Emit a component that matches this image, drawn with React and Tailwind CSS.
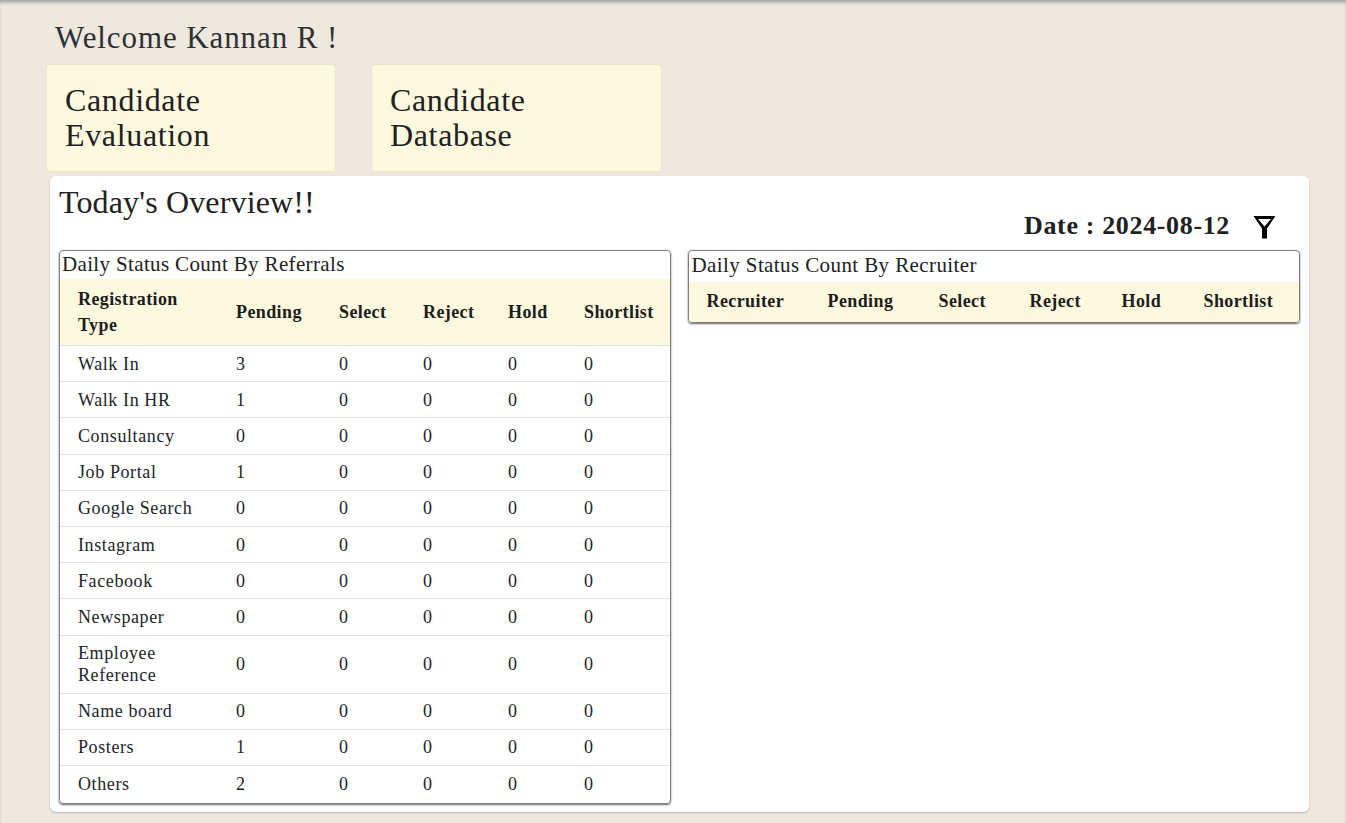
const serif = { fontFamily: '"Liberation Serif", serif' };

const referralRows = [
  ["Walk In", 3],
  ["Walk In HR", 1],
  ["Consultancy", 0],
  ["Job Portal", 1],
  ["Google Search", 0],
  ["Instagram", 0],
  ["Facebook", 0],
  ["Newspaper", 0],
  ["Employee Reference", 0],
  ["Name board", 0],
  ["Posters", 1],
  ["Others", 2],
];

const referralCols = [158, 103, 84, 85, 76, 104];
const recruiterCols = [121, 111, 91, 92, 82, 114];

const HeaderCell = ({ children, width }) => (
  <th
    style={{ width }}
    className="pl-[18px] pr-2 text-left align-middle text-[18px] leading-[26px] font-bold tracking-[0.4px] text-[#1d1d1d]"
  >
    {children}
  </th>
);

const QuickCard = ({ first, second, className }) => (
  <div className={`h-[108px] rounded border border-[#ebe5cf] bg-[#fdf9df] pt-[18px] pl-[18px] text-[32px] leading-[35px] tracking-[0.65px] text-[#212121] ${className}`}>
    {first}
    <br />
    {second}
  </div>
);

const App = () => {
  return (
    <div style={serif} className="h-[823px] w-full overflow-hidden bg-[#efe8df] shadow-[inset_0_4px_4px_-2px_#999]">
      {/* greeting */}
      <h1 className="pt-[20px] pl-[55px] text-[31px] leading-[36px] tracking-[0.9px] text-[#2d3136]">
        Welcome Kannan R !
      </h1>

      {/* quick links */}
      <div className="mt-[8px] ml-[46px] flex gap-[35px]">
        <QuickCard className="w-[290px]" first="Candidate" second="Evaluation" />
        <QuickCard className="w-[291px]" first="Candidate" second="Database" />
      </div>

      {/* overview */}
      <div className="mt-[4px] ml-[50px] h-[636px] w-[1259px] rounded-md bg-white px-[9px] shadow-[0_1px_2px_#b5b5b5]">
        <div className="flex h-[74px] items-start justify-between">
          <h2 className="pt-[8px] text-[32px] leading-[36px] tracking-[0.15px] text-[#212121]">
            Today's Overview!!
          </h2>
          <div className="flex items-center pt-[33px] pr-[24px]">
            <span className="text-[26px] leading-[34px] font-bold tracking-[0.65px] text-[#212121]">
              Date : 2024-08-12
            </span>
            <svg className="mt-[2px] ml-[23px]" width="23" height="23" viewBox="0 0 23 23" fill="#000">
              <path fillRule="evenodd" d="M0.5 0H22.5L14 12.5V22.5H9V12.5ZM5 3L11.5 10.5L18 3Z" />
            </svg>
          </div>
        </div>

        <div className="flex items-start gap-[17px]">
          {/* referrals */}
          <div className="w-[612px] overflow-hidden rounded border border-[#808080] pb-[1.5px] shadow-[0_1px_2px_#666]">
            <div className="h-[28px] pl-[2px] text-[21px] leading-[27px] tracking-[0.35px] text-[#212121]">
              Daily Status Count By Referrals
            </div>
            <table className="w-full table-fixed border-collapse">
              <thead>
                <tr className="h-[66.5px] bg-[#fdf9df]">
                  <HeaderCell width={referralCols[0]}>Registration Type</HeaderCell>
                  <HeaderCell width={referralCols[1]}>Pending</HeaderCell>
                  <HeaderCell width={referralCols[2]}>Select</HeaderCell>
                  <HeaderCell width={referralCols[3]}>Reject</HeaderCell>
                  <HeaderCell width={referralCols[4]}>Hold</HeaderCell>
                  <HeaderCell width={referralCols[5]}>Shortlist</HeaderCell>
                </tr>
              </thead>
              <tbody className="text-[18px] leading-[22px] tracking-[0.6px] text-[#212529]">
                {referralRows.map(([name, pending]) => (
                  <tr key={name} className="border-t border-[#dee2e6]">
                    <td className="py-[6.6px] pr-2 pl-[18px]">{name}</td>
                    <td className="pl-[18px]">{pending}</td>
                    <td className="pl-[18px]">0</td>
                    <td className="pl-[18px]">0</td>
                    <td className="pl-[18px]">0</td>
                    <td className="pl-[18px]">0</td>
                  </tr>
                ))}
              </tbody>
            </table>
          </div>

          {/* recruiter */}
          <div className="w-[613px] overflow-hidden rounded border border-[#808080] shadow-[0_1px_2px_#666]">
            <div className="h-[31px] pt-[1px] pl-[3px] text-[21px] leading-[27px] tracking-[0.4px] text-[#212121]">
              Daily Status Count By Recruiter
            </div>
            <table className="w-full table-fixed border-collapse">
              <thead>
                <tr className="h-[40px] bg-[#fdf9df] [&>th]:pb-[2px]">
                  <HeaderCell width={recruiterCols[0]}>Recruiter</HeaderCell>
                  <HeaderCell width={recruiterCols[1]}>Pending</HeaderCell>
                  <HeaderCell width={recruiterCols[2]}>Select</HeaderCell>
                  <HeaderCell width={recruiterCols[3]}>Reject</HeaderCell>
                  <HeaderCell width={recruiterCols[4]}>Hold</HeaderCell>
                  <HeaderCell width={recruiterCols[5]}>Shortlist</HeaderCell>
                </tr>
              </thead>
            </table>
          </div>
        </div>
      </div>
    </div>
  );
};

export default App;
